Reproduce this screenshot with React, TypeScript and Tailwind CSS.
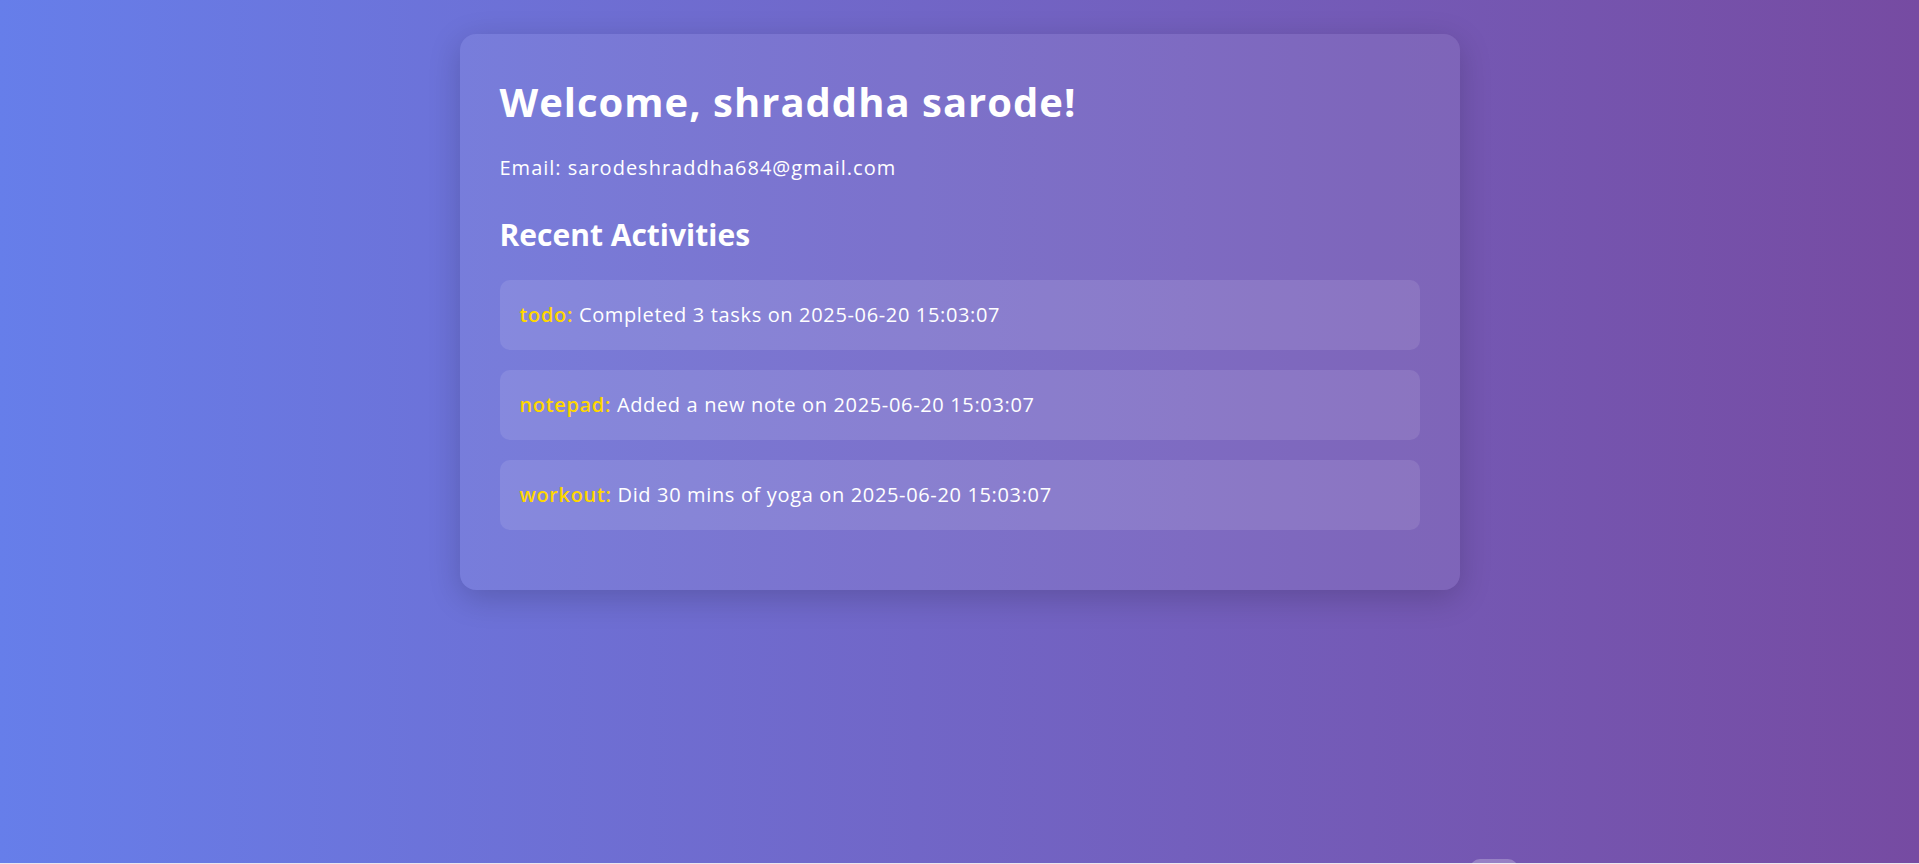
import React from "react";

const activities = [
  { type: "todo", text: "Completed 3 tasks on 2025-06-20 15:03:07" },
  { type: "notepad", text: "Added a new note on 2025-06-20 15:03:07" },
  { type: "workout", text: "Did 30 mins of yoga on 2025-06-20 15:03:07" },
];

export default function App() {
  return (
    <div
      className="relative h-[864px] overflow-hidden bg-[#e9e8ee]"
      style={{ fontFamily: '"Open Sans", "Noto Sans", sans-serif' }}
    >
      <div className="h-[863px] bg-linear-to-r from-[#667eea] to-[#764ba2] pt-[34px]">
        <div className="mx-auto w-[1000px] rounded-2xl bg-white/[0.08] px-10 pt-10 pb-[60px] text-white shadow-[0_8px_32px_rgba(0,0,0,0.18)]">
          <h1 className="mt-[4px] text-[40px] font-bold leading-[48px] tracking-[1px]">
            Welcome, shraddha sarode!
          </h1>
          <p className="mt-[27px] text-[20px] leading-[30px] tracking-[1px]">
            Email: sarodeshraddha684@gmail.com
          </p>
          <h2 className="mt-[34px] text-[30px] font-bold leading-[36px]">
            Recent Activities
          </h2>
          <ul className="mt-[27px] flex flex-col gap-5">
            {activities.map((a) => (
              <li
                key={a.type}
                className="rounded-[10px] bg-white/10 px-5 py-5 text-[20px] leading-[30px] tracking-[0.65px]"
              >
                <span className="font-semibold text-[#ffd700]">{a.type}:</span>{" "}
                {a.text}
              </li>
            ))}
          </ul>
        </div>
      </div>
      <div className="absolute left-[1470px] top-[859px] h-[20px] w-[48px] rounded-t-[10px] bg-white/25" />
    </div>
  );
}
